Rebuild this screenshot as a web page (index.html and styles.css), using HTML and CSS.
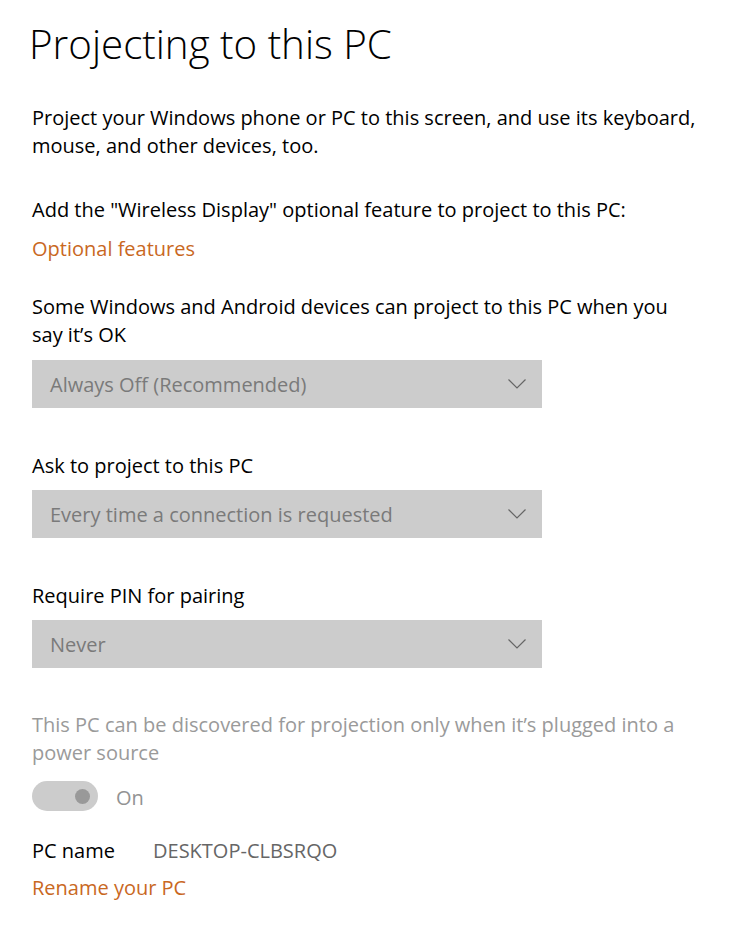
FILE: index.html
```html
<!DOCTYPE html>
<html>
<head>
<meta charset="utf-8">
<link rel="stylesheet" href="styles.css">
</head>
<body>
<div class="page">
  <h1 class="title">Projecting to this PC</h1>
  <p class="text para1">Project your Windows phone or PC to this screen, and use its keyboard, mouse, and other devices, too.</p>
  <p class="text para2">Add the "Wireless Display" optional feature to project to this PC:</p>
  <a class="link link-opt">Optional features</a>
  <p class="text para3">Some Windows and Android devices can project to this PC when you say it’s OK</p>
  <div class="select select-first">
    <span class="select-value">Always Off (Recommended)</span>
    <svg class="chev" width="18" height="10" viewBox="0 0 18 10"><path d="M0.5 0.5 L9 9 L17.5 0.5" fill="none" stroke="#666" stroke-width="1.2"/></svg>
  </div>
  <p class="text label">Ask to project to this PC</p>
  <div class="select">
    <span class="select-value">Every time a connection is requested</span>
    <svg class="chev" width="18" height="10" viewBox="0 0 18 10"><path d="M0.5 0.5 L9 9 L17.5 0.5" fill="none" stroke="#666" stroke-width="1.2"/></svg>
  </div>
  <p class="text label">Require PIN for pairing</p>
  <div class="select">
    <span class="select-value">Never</span>
    <svg class="chev" width="18" height="10" viewBox="0 0 18 10"><path d="M0.5 0.5 L9 9 L17.5 0.5" fill="none" stroke="#666" stroke-width="1.2"/></svg>
  </div>
  <p class="text disabled para4">This PC can be discovered for projection only when it’s plugged into a power source</p>
  <div class="toggle-row">
    <span class="toggle"><span class="knob"></span></span>
    <span class="toggle-label">On</span>
  </div>
  <div class="name-row">
    <span class="name-key">PC name</span>
    <span class="name-val">DESKTOP-CLBSRQO</span>
  </div>
  <a class="link link-rename">Rename your PC</a>
</div>
</body>
</html>
```
FILE: styles.css
```css
html, body {
  margin: 0;
  padding: 0;
  background: #ffffff;
}
body {
  font-family: "Open Sans", "Noto Sans", sans-serif;
  color: #000;
}
.page {
  padding: 14px 0 0 32px;
  width: 668px;
  display: flex;
  flex-direction: column;
  align-items: flex-start;
}
.title {
  font-weight: 300;
  font-size: 40.3px;
  line-height: 60px;
  margin: 0 0 0 -3px;
}
.text {
  margin: 0;
  font-size: 20px;
  line-height: 28px;
}
.para1 { margin-top: 30px; }
.para2 { margin-top: 36px; }
.link {
  color: #c9681f;
  font-size: 20px;
  line-height: 28px;
  margin-top: 11px;
}
.para3 { margin-top: 30px; }
.select {
  margin-top: 10px;
  width: 510px;
  height: 48px;
  background: #cccccc;
  display: flex;
  align-items: center;
  justify-content: space-between;
  box-sizing: border-box;
  padding: 0 16px 0 18px;
}
.select-first { margin-top: 11px; }
.select-value {
  color: #7a7a7a;
  font-size: 20px;
}
.chev { display: block; }
.label { margin-top: 44px; }
.disabled { color: #9a9a9a; }
.para4 { margin-top: 43px; }
.toggle-row {
  display: flex;
  align-items: center;
  margin-top: 14px;
  height: 30px;
}
.toggle {
  width: 66px;
  height: 30px;
  border-radius: 15px;
  background: #cccccc;
  position: relative;
  display: block;
}
.knob {
  position: absolute;
  width: 15px;
  height: 15px;
  border-radius: 50%;
  background: #999999;
  right: 8px;
  top: 7.5px;
}
.toggle-label {
  margin-left: 18px;
  padding-top: 4px;
  line-height: 26px;
  color: #939393;
  font-size: 20px;
}
.name-row {
  display: flex;
  margin-top: 26px;
  font-size: 20px;
  line-height: 28px;
}
.name-key { width: 121px; }
.name-val { color: #666666; }
.link-rename { margin-top: 9px; }
```
